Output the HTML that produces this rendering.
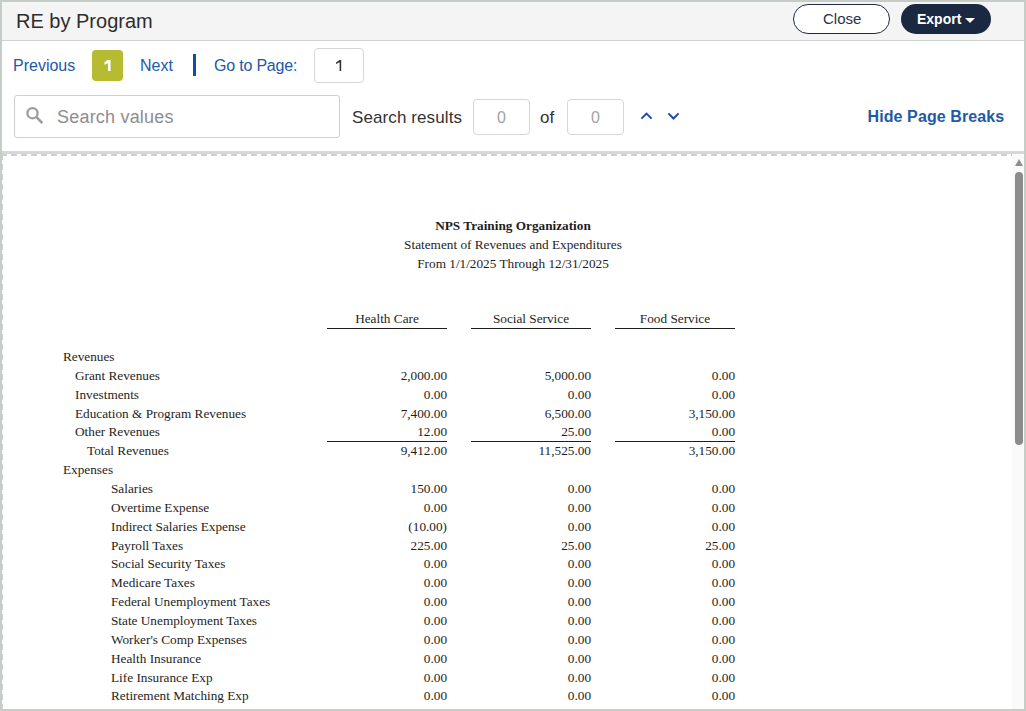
<!DOCTYPE html>
<html><head><meta charset="utf-8">
<style>
*{box-sizing:border-box;margin:0;padding:0}
html,body{width:1026px;height:711px;overflow:hidden;background:#fff}
body{position:relative;font-family:"Liberation Sans",sans-serif;color:#2f2f2f}
.a{position:absolute;white-space:pre}
#frame{position:absolute;left:0;top:0;width:1026px;height:711px;border:2px solid #c6cdc7;z-index:50;pointer-events:none}
#hdr{position:absolute;left:0;top:0;width:1026px;height:41px;background:#f4f4f4;border-bottom:1px solid #d2d2d2}
.t{font-size:20px;line-height:20px;color:#2d2d2d}
.lnk{font-size:16px;line-height:16px;color:#2258a8}
.btn{position:absolute;top:4px;height:30px;border-radius:15px}
.inp{position:absolute;border:1px solid #d3d7dc;border-radius:4px;background:#fff}
.gray0{font-size:16px;line-height:16px;color:#a3a3a3}
.rep{font-family:"Liberation Serif",serif;font-size:13.25px;line-height:16px;color:#1e1e1e}
.r{text-align:right;width:120px;transform-origin:100% 0}
.c{transform-origin:50% 0}
.hl{position:absolute;height:1px;background:#1e1e1e;width:120px}
</style></head><body>
<div id="hdr"></div>
<div class="a t" style="left:16px;top:11px">RE by Program</div>
<div class="btn" style="left:793px;width:97px;border:1px solid #1d2b44;background:#fff"></div>
<div class="a" style="left:823px;top:11px;font-size:15px;line-height:15px;color:#26334a">Close</div>
<div class="btn" style="left:901px;width:90px;background:#1a2842"></div>
<div class="a" style="left:917px;top:12px;font-size:14px;line-height:15px;font-weight:700;color:#fff">Export</div>
<div class="a" style="left:965px;top:18px;width:0;height:0;border-left:5px solid transparent;border-right:5px solid transparent;border-top:5px solid #fff"></div>

<!-- toolbar row 1 -->
<div class="a lnk" style="left:13px;top:58px">Previous</div>
<div class="a" style="left:92px;top:50px;width:31px;height:31px;border-radius:4px;background:#b6bc31"></div>
<svg class="a" style="left:92px;top:50px" width="31" height="31" viewBox="0 0 31 31"><path d="M15.4 10.1 L18.6 10.1 L18.6 21 L16 21 L16 13.3 L12.4 14.8 L12.4 12.6 Z" fill="#fff"/></svg>
<div class="a lnk" style="left:140px;top:58px">Next</div>
<div class="a" style="left:193px;top:54px;width:3px;height:22px;background:#0e4ea3"></div>
<div class="a lnk" style="left:214px;top:58px;letter-spacing:-0.2px">Go to Page:</div>
<div class="inp" style="left:314px;top:48px;width:50px;height:35px"></div>
<svg class="a" style="left:314px;top:48px" width="50" height="35" viewBox="0 0 50 35"><path d="M25.6 12 L27.2 12 L27.2 23 L25.6 23 L25.6 14.2 L22 16 L22 14.5 Z" fill="#333"/></svg>

<!-- toolbar row 2 -->
<div class="inp" style="left:14px;top:95px;width:326px;height:43px;border-color:#cfcfcf;border-radius:3px"></div>
<svg class="a" style="left:20px;top:100px" width="30" height="30" viewBox="0 0 30 30"><circle cx="12.5" cy="13.2" r="5.1" fill="none" stroke="#9c9c9c" stroke-width="2.3"/><line x1="16.4" y1="17.1" x2="22.3" y2="23" stroke="#9c9c9c" stroke-width="2.5"/></svg>
<div class="a" style="left:57px;top:108px;font-size:18px;line-height:18px;letter-spacing:0.2px;color:#8e8e8e">Search values</div>
<div class="a" style="left:352px;top:109px;font-size:17px;line-height:17px;letter-spacing:0.1px;color:#333">Search results</div>
<div class="inp" style="left:473px;top:99px;width:57px;height:36px"></div>
<div class="a gray0" style="left:473px;top:110px;width:57px;text-align:center">0</div>
<div class="a" style="left:540px;top:109px;font-size:17px;line-height:17px;color:#333">of</div>
<div class="inp" style="left:567px;top:99px;width:57px;height:36px"></div>
<div class="a gray0" style="left:567px;top:110px;width:57px;text-align:center">0</div>
<svg class="a" style="left:635px;top:105px" width="55" height="23" viewBox="0 0 55 23"><polyline points="6.4,13.6 11.5,8.6 16.6,13.6" fill="none" stroke="#1a4ea6" stroke-width="2"/><polyline points="33.4,8.4 38.5,13.5 43.6,8.4" fill="none" stroke="#1a4ea6" stroke-width="2"/></svg>
<div class="a" style="left:867.5px;top:109px;font-size:16px;line-height:16px;font-weight:700;letter-spacing:0.1px;color:#1f5aa6">Hide Page Breaks</div>

<!-- separators -->
<div class="a" style="left:0;top:151px;width:1026px;height:3px;background:#d4d8db"></div>
<div class="a" style="left:2px;top:154px;width:1010px;height:2px;background:repeating-linear-gradient(90deg,#cfcfcf 0 5px,transparent 5px 9px,#cfcfcf 9px 10px)"></div>
<div class="a" style="left:2px;top:154px;width:1px;height:556px;background:repeating-linear-gradient(180deg,#cfcfcf 0 6px,transparent 6px 10px)"></div>

<!-- scrollbar -->
<div class="a" style="left:1012px;top:155px;width:12px;height:555px;background:#fafafa"></div>
<div class="a" style="left:1015px;top:159px;width:0;height:0;border-left:4px solid transparent;border-right:4px solid transparent;border-bottom:7px solid #8f8f8f"></div>
<div class="a" style="left:1015px;top:172px;width:8px;height:273px;border-radius:4px;background:#8c8c8c"></div>

<div id="report">
<div class="a rep c" style="left:0;width:1026px;text-align:center;top:217.80px;font-weight:700;padding-left:0px">NPS Training Organization</div>
<div class="a rep c" style="left:0;width:1026px;text-align:center;top:237.10px">Statement of Revenues and Expenditures</div>
<div class="a rep c" style="left:0;width:1026px;text-align:center;top:255.70px">From 1/1/2025 Through 12/31/2025</div>
<div class="a rep c" style="left:327px;width:120px;text-align:center;top:310.70px">Health Care</div>
<div class="hl" style="left:327px;top:328px"></div>
<div class="a rep c" style="left:471px;width:120px;text-align:center;top:310.70px">Social Service</div>
<div class="hl" style="left:471px;top:328px"></div>
<div class="a rep c" style="left:615px;width:120px;text-align:center;top:310.70px">Food Service</div>
<div class="hl" style="left:615px;top:328px"></div>
<div class="a rep" style="left:63px;top:349.00px">Revenues</div>
<div class="a rep" style="left:75px;top:367.86px">Grant Revenues</div>
<div class="a rep r" style="left:327px;top:367.86px">2,000.00</div>
<div class="a rep r" style="left:471px;top:367.86px">5,000.00</div>
<div class="a rep r" style="left:615px;top:367.86px">0.00</div>
<div class="a rep" style="left:75px;top:386.72px">Investments</div>
<div class="a rep r" style="left:327px;top:386.72px">0.00</div>
<div class="a rep r" style="left:471px;top:386.72px">0.00</div>
<div class="a rep r" style="left:615px;top:386.72px">0.00</div>
<div class="a rep" style="left:75px;top:405.58px">Education &amp; Program Revenues</div>
<div class="a rep r" style="left:327px;top:405.58px">7,400.00</div>
<div class="a rep r" style="left:471px;top:405.58px">6,500.00</div>
<div class="a rep r" style="left:615px;top:405.58px">3,150.00</div>
<div class="a rep" style="left:75px;top:424.44px">Other Revenues</div>
<div class="a rep r" style="left:327px;top:424.44px">12.00</div>
<div class="a rep r" style="left:471px;top:424.44px">25.00</div>
<div class="a rep r" style="left:615px;top:424.44px">0.00</div>
<div class="a rep" style="left:87px;top:443.30px">Total Revenues</div>
<div class="a rep r" style="left:327px;top:443.30px">9,412.00</div>
<div class="a rep r" style="left:471px;top:443.30px">11,525.00</div>
<div class="a rep r" style="left:615px;top:443.30px">3,150.00</div>
<div class="a rep" style="left:63px;top:462.16px">Expenses</div>
<div class="a rep" style="left:111px;top:481.02px">Salaries</div>
<div class="a rep r" style="left:327px;top:481.02px">150.00</div>
<div class="a rep r" style="left:471px;top:481.02px">0.00</div>
<div class="a rep r" style="left:615px;top:481.02px">0.00</div>
<div class="a rep" style="left:111px;top:499.88px">Overtime Expense</div>
<div class="a rep r" style="left:327px;top:499.88px">0.00</div>
<div class="a rep r" style="left:471px;top:499.88px">0.00</div>
<div class="a rep r" style="left:615px;top:499.88px">0.00</div>
<div class="a rep" style="left:111px;top:518.74px">Indirect Salaries Expense</div>
<div class="a rep r" style="left:327px;top:518.74px">(10.00)</div>
<div class="a rep r" style="left:471px;top:518.74px">0.00</div>
<div class="a rep r" style="left:615px;top:518.74px">0.00</div>
<div class="a rep" style="left:111px;top:537.60px">Payroll Taxes</div>
<div class="a rep r" style="left:327px;top:537.60px">225.00</div>
<div class="a rep r" style="left:471px;top:537.60px">25.00</div>
<div class="a rep r" style="left:615px;top:537.60px">25.00</div>
<div class="a rep" style="left:111px;top:556.46px">Social Security Taxes</div>
<div class="a rep r" style="left:327px;top:556.46px">0.00</div>
<div class="a rep r" style="left:471px;top:556.46px">0.00</div>
<div class="a rep r" style="left:615px;top:556.46px">0.00</div>
<div class="a rep" style="left:111px;top:575.32px">Medicare Taxes</div>
<div class="a rep r" style="left:327px;top:575.32px">0.00</div>
<div class="a rep r" style="left:471px;top:575.32px">0.00</div>
<div class="a rep r" style="left:615px;top:575.32px">0.00</div>
<div class="a rep" style="left:111px;top:594.18px">Federal Unemployment Taxes</div>
<div class="a rep r" style="left:327px;top:594.18px">0.00</div>
<div class="a rep r" style="left:471px;top:594.18px">0.00</div>
<div class="a rep r" style="left:615px;top:594.18px">0.00</div>
<div class="a rep" style="left:111px;top:613.04px">State Unemployment Taxes</div>
<div class="a rep r" style="left:327px;top:613.04px">0.00</div>
<div class="a rep r" style="left:471px;top:613.04px">0.00</div>
<div class="a rep r" style="left:615px;top:613.04px">0.00</div>
<div class="a rep" style="left:111px;top:631.90px">Worker's Comp Expenses</div>
<div class="a rep r" style="left:327px;top:631.90px">0.00</div>
<div class="a rep r" style="left:471px;top:631.90px">0.00</div>
<div class="a rep r" style="left:615px;top:631.90px">0.00</div>
<div class="a rep" style="left:111px;top:650.76px">Health Insurance</div>
<div class="a rep r" style="left:327px;top:650.76px">0.00</div>
<div class="a rep r" style="left:471px;top:650.76px">0.00</div>
<div class="a rep r" style="left:615px;top:650.76px">0.00</div>
<div class="a rep" style="left:111px;top:669.62px">Life Insurance Exp</div>
<div class="a rep r" style="left:327px;top:669.62px">0.00</div>
<div class="a rep r" style="left:471px;top:669.62px">0.00</div>
<div class="a rep r" style="left:615px;top:669.62px">0.00</div>
<div class="a rep" style="left:111px;top:688.48px">Retirement Matching Exp</div>
<div class="a rep r" style="left:327px;top:688.48px">0.00</div>
<div class="a rep r" style="left:471px;top:688.48px">0.00</div>
<div class="a rep r" style="left:615px;top:688.48px">0.00</div>
<div class="hl" style="left:327px;top:441px"></div>
<div class="hl" style="left:471px;top:441px"></div>
<div class="hl" style="left:615px;top:441px"></div>
</div>

<div id="frame"></div>
</body></html>
